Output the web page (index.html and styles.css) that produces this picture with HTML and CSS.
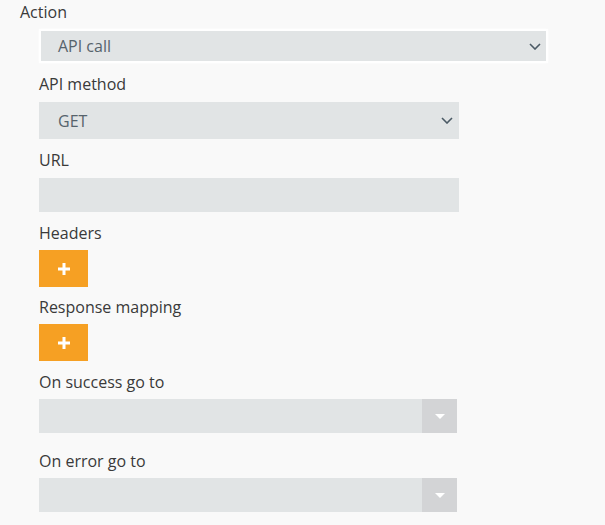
FILE: index.html
```html
<!DOCTYPE html>
<html>
<head>
<meta charset="utf-8">
<link rel="stylesheet" href="styles.css">
</head>
<body>
<div class="form">
  <div class="label">Action</div>
  <div class="action-wrap">
    <div class="select action">
      <span class="value">API call</span>
      <svg class="chev" width="12" height="7" viewBox="0 0 12 7"><polyline points="1,1 6,6 11,1" fill="none" stroke="#4b5a65" stroke-width="1.6"/></svg>
    </div>
  </div>
  <div class="fields">
    <div class="field">
      <div class="label">API method</div>
      <div class="select method">
        <span class="value">GET</span>
        <svg class="chev" width="12" height="7" viewBox="0 0 12 7"><polyline points="1,1 6,6 11,1" fill="none" stroke="#4b5a65" stroke-width="1.6"/></svg>
      </div>
    </div>
    <div class="field">
      <div class="label">URL</div>
      <div class="input"></div>
    </div>
    <div class="field tight">
      <div class="label">Headers</div>
      <div class="add"><svg width="14" height="14" viewBox="0 0 14 14"><path d="M7 1v12M1 7h12" stroke="#fff" stroke-width="3"/></svg></div>
    </div>
    <div class="field tight wide">
      <div class="label">Response mapping</div>
      <div class="add"><svg width="14" height="14" viewBox="0 0 14 14"><path d="M7 1v12M1 7h12" stroke="#fff" stroke-width="3"/></svg></div>
    </div>
    <div class="field tight gap">
      <div class="label">On success go to</div>
      <div class="combo"><div class="combo-arrow"><span class="tri"></span></div></div>
    </div>
    <div class="field tight">
      <div class="label">On error go to</div>
      <div class="combo"><div class="combo-arrow"><span class="tri"></span></div></div>
    </div>
  </div>
</div>
</body>
</html>
```
FILE: styles.css
```css
html, body {
  margin: 0;
  padding: 0;
  background: #f9f9f9;
}
body {
  font-family: "Open Sans", "Noto Sans", sans-serif;
  font-size: 16px;
  color: #3a3a3a;
}
.form {
  padding-left: 20px;
}
.label {
  line-height: 24px;
  height: 24px;
}
.action-wrap {
  margin-top: 5px;
  margin-left: 19px;
  width: 505px;
  border: 2px solid #ffffff;
  box-shadow: 0 0 2px rgba(255,255,255,0.9);
}
.select {
  background: #e1e4e5;
  display: flex;
  align-items: center;
  justify-content: space-between;
  box-sizing: border-box;
  color: #56636c;
}
.select.action {
  height: 30px;
  padding: 0 5px 0 17px;
}
.select.method {
  height: 37px;
  width: 420px;
  padding: 0 6px 0 19px;
}
.value {
  line-height: 24px;
}
.fields {
  margin-left: 19px;
  margin-top: 9px;
}
.field {
  margin-bottom: 9px;
}
.field .label {
  margin-bottom: 6px;
}
.field.tight {
  margin-bottom: 8px;
}
.field.tight .label {
  margin-bottom: 5px;
}
.field.wide {
  margin-bottom: 9px;
}
.input {
  width: 420px;
  height: 34px;
  background: #e1e4e5;
}
.add {
  width: 49px;
  height: 37px;
  background: #f6a023;
  display: flex;
  align-items: center;
  justify-content: center;
}
.field.gap {
  margin-bottom: 16px;
}
.combo {
  width: 418px;
  height: 34px;
  background: #e1e4e5;
  display: flex;
  justify-content: flex-end;
}
.combo-arrow {
  width: 35px;
  height: 34px;
  background: #d3d4d6;
  display: flex;
  align-items: center;
  justify-content: center;
}
.tri {
  width: 0;
  height: 0;
  border-left: 5px solid transparent;
  border-right: 5px solid transparent;
  border-top: 5px solid #ffffff;
}
```
